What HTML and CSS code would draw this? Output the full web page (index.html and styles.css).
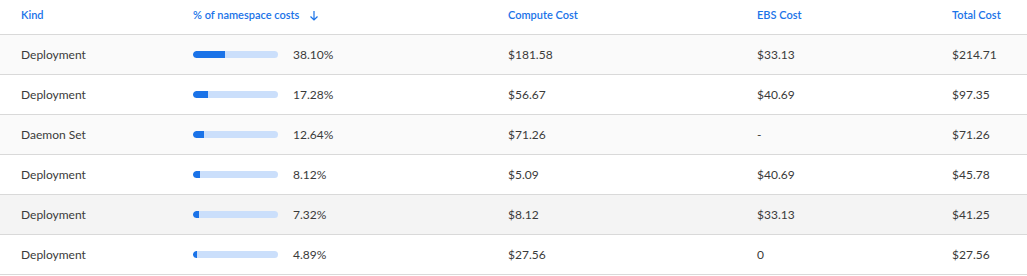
FILE: index.html
```html
<!DOCTYPE html>
<html>
<head>
<meta charset="utf-8">
<link rel="stylesheet" href="styles.css">
</head>
<body>
<div class="table">
  <div class="row head">
    <div class="cell">Kind</div>
    <div class="cell">% of namespace costs
      <svg class="sort" width="10" height="11" viewBox="0 0 10 11"><path d="M5 1 V10 M1.5 6.5 L5 10 L8.5 6.5" fill="none" stroke="#1a73e8" stroke-width="1.2"/></svg>
    </div>
    <div class="cell">Compute Cost</div>
    <div class="cell">EBS Cost</div>
    <div class="cell">Total Cost</div>
  </div>
  <div class="row striped">
    <div class="cell">Deployment</div>
    <div class="cell pct"><div class="bar"><div class="fill" style="width:38.10%"></div></div><span>38.10%</span></div>
    <div class="cell">$181.58</div>
    <div class="cell">$33.13</div>
    <div class="cell">$214.71</div>
  </div>
  <div class="row">
    <div class="cell">Deployment</div>
    <div class="cell pct"><div class="bar"><div class="fill" style="width:17.28%"></div></div><span>17.28%</span></div>
    <div class="cell">$56.67</div>
    <div class="cell">$40.69</div>
    <div class="cell">$97.35</div>
  </div>
  <div class="row striped">
    <div class="cell">Daemon Set</div>
    <div class="cell pct"><div class="bar"><div class="fill" style="width:12.64%"></div></div><span>12.64%</span></div>
    <div class="cell">$71.26</div>
    <div class="cell">-</div>
    <div class="cell">$71.26</div>
  </div>
  <div class="row">
    <div class="cell">Deployment</div>
    <div class="cell pct"><div class="bar"><div class="fill" style="width:8.12%"></div></div><span>8.12%</span></div>
    <div class="cell">$5.09</div>
    <div class="cell">$40.69</div>
    <div class="cell">$45.78</div>
  </div>
  <div class="row hover">
    <div class="cell">Deployment</div>
    <div class="cell pct"><div class="bar"><div class="fill" style="width:7.32%"></div></div><span>7.32%</span></div>
    <div class="cell">$8.12</div>
    <div class="cell">$33.13</div>
    <div class="cell">$41.25</div>
  </div>
  <div class="row">
    <div class="cell">Deployment</div>
    <div class="cell pct"><div class="bar"><div class="fill" style="width:4.89%"></div></div><span>4.89%</span></div>
    <div class="cell">$27.56</div>
    <div class="cell">0</div>
    <div class="cell">$27.56</div>
  </div>
</div>
</body>
</html>
```
FILE: styles.css
```css
html, body {
  margin: 0;
  padding: 0;
  background: #ffffff;
}
body {
  font-family: Lato, "Open Sans", "Liberation Sans", sans-serif;
  font-size: 12px;
  color: #3a3a3a;
}
.table {
  width: 1027px;
}
.row {
  display: grid;
  grid-template-columns: 172px 315px 249px 195px 1fr;
  align-items: center;
  padding-left: 21px;
  height: 39px;
  border-bottom: 1px solid #d9d9d9;
}
.row.head {
  height: 34px;
  align-items: start;
}
.row.head .cell {
  color: #1a73e8;
  font-weight: 600;
  font-size: 11px;
  padding-top: 8px;
  display: flex;
  align-items: center;
}
.sort {
  margin-left: 10px;
  margin-top: 1px;
}
.row.striped {
  background: #fafafa;
}
.row.hover {
  background: #f4f4f4;
}
.cell {
  white-space: nowrap;
}
.pct {
  display: flex;
  align-items: center;
}
.bar {
  width: 85px;
  height: 7px;
  border-radius: 4px;
  background: #cbdffb;
  overflow: hidden;
  margin-right: 15px;
}
.fill {
  height: 100%;
  background: #1a73e8;
  border-radius: 4px 0 0 4px;
}
```
